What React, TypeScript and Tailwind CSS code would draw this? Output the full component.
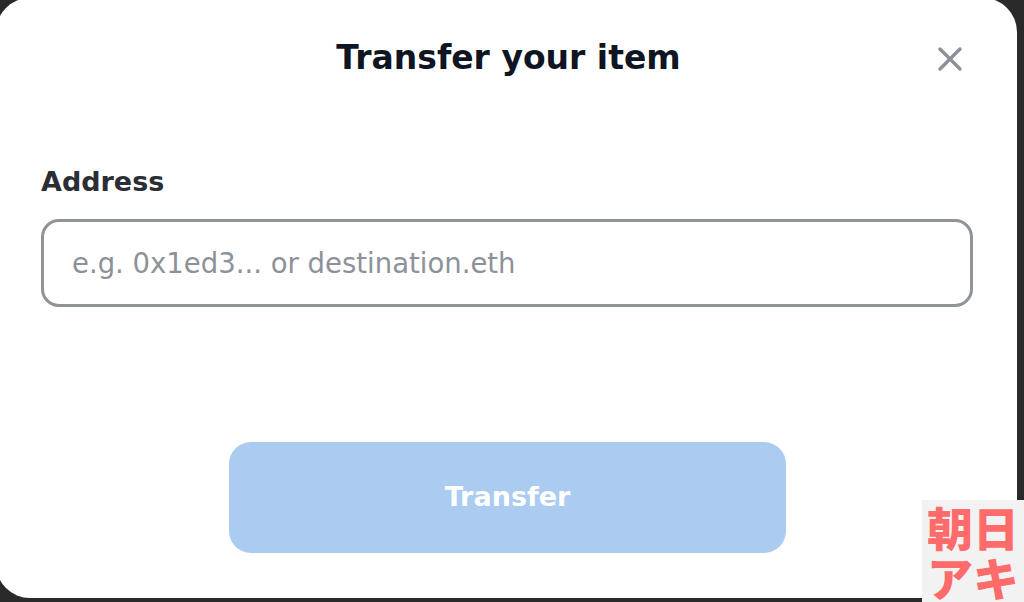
import { X } from "lucide-react";

export default function App() {
  return (
    <div
      className="relative w-[1024px] h-[602px] overflow-hidden bg-[#2a2a2a]"
      style={{ fontFamily: "'DejaVu Sans', Inter, sans-serif" }}
    >
      {/* Modal */}
      <div className="w-[1021px] h-[600px] -ml-[4px] -mt-[2px] rounded-[34px] bg-white flex flex-col">
        {/* Header */}
        <div className="relative flex items-center justify-center pt-[36px] h-[96px] pl-[4px]">
          <h2 className="text-[33px] font-bold text-[#0f1522] leading-none -mt-[13px]">
            Transfer your item
          </h2>
          <button className="absolute right-[47px] top-[41px] text-[#8b9098]">
            <X className="w-[40px] h-[40px]" strokeWidth={2} />
          </button>
        </div>

        {/* Body */}
        <div className="flex flex-col pl-[45px] pr-[44px] pt-[74px]">
          <label className="text-[27px] font-bold text-[#2c2e35] leading-none">Address</label>
          <input
            placeholder="e.g. 0x1ed3... or destination.eth"
            className="mt-[24px] h-[88px] w-full rounded-[18px] border-[3px] border-[#8f939a] px-[28px] text-[27.5px] text-[#2c2e35] placeholder:text-[#8d9198] outline-none"
          />
        </div>

        {/* Footer */}
        <div className="flex justify-center pt-[135px] pl-[2px]">
          <button className="w-[557px] h-[111px] rounded-[22px] bg-[#abcbf1] text-white text-[27px] font-bold">
            Transfer
          </button>
        </div>
      </div>

      {/* Watermark */}
      <div
        className="absolute right-0 bottom-0 w-[102px] h-[102px] bg-[#f2f2f2] flex flex-col items-center justify-center leading-[50px] text-[#ff6b6b] text-[46px] font-black"
        style={{ fontFamily: "'Noto Sans CJK JP', sans-serif" }}
      >
        <span>朝日</span>
        <span>アキ</span>
      </div>
    </div>
  );
}
